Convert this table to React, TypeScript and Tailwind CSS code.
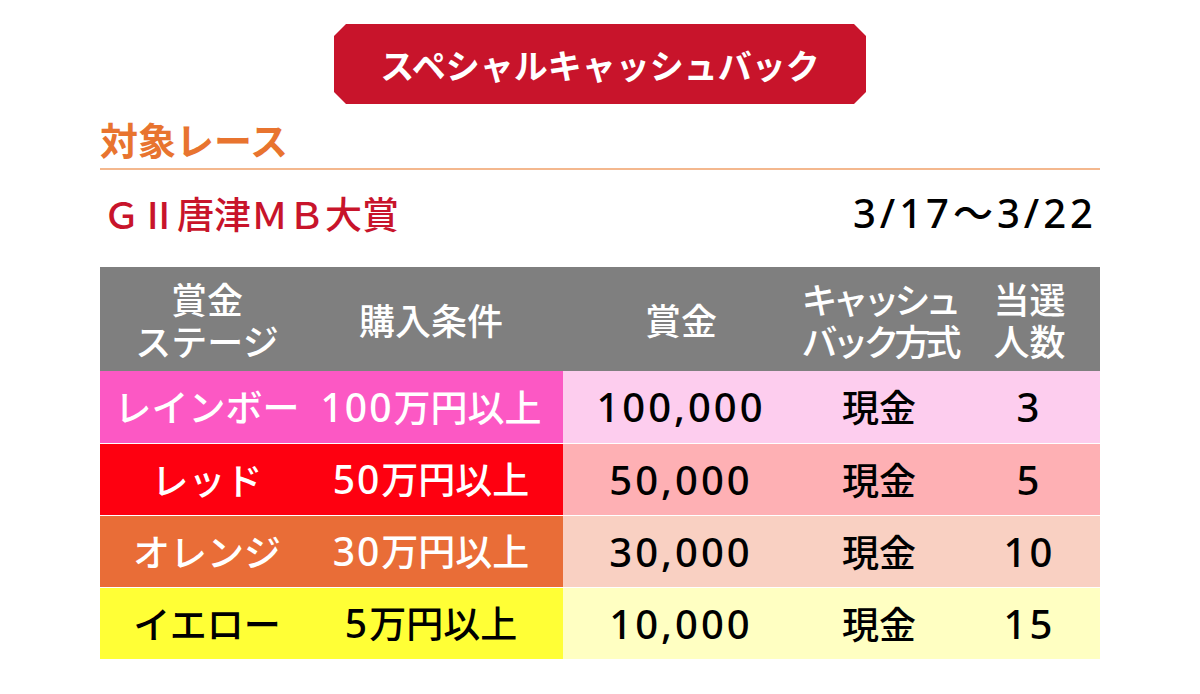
import React from "react";

const rows = [
  { stage: "レインボー", num: "100", prize: "100,000", n: "3", l: "bg-[#fc58c4]", r: "bg-[#fdcdee]", t: "text-white" },
  { stage: "レッド", num: "50", prize: "50,000", n: "5", l: "bg-[#fe0010]", r: "bg-[#feb0b4]", t: "text-white" },
  { stage: "オレンジ", num: "30", prize: "30,000", n: "10", l: "bg-[#e96d37]", r: "bg-[#f9d0c2]", t: "text-white" },
  { stage: "イエロー", num: "5", prize: "10,000", n: "15", l: "bg-[#ffff36]", r: "bg-[#ffffc2]", t: "text-black" },
];

const latin = { fontFamily: '"Noto Sans", "Noto Sans CJK JP", sans-serif' };

export default function App() {
  return (
    <div
      className="w-[1200px] h-[694px] bg-white flex flex-col items-stretch px-[100px]"
      style={{ fontFamily: '"Noto Sans CJK JP", "Noto Sans", sans-serif' }}
    >
      <div className="flex justify-center pt-[24px]">
        <div className="w-[532px] h-[80px] bg-[#c8142b] text-white text-[34px] font-bold flex items-center justify-center [clip-path:polygon(12px_0,calc(100%-12px)_0,100%_12px,100%_calc(100%-12px),calc(100%-12px)_100%,12px_100%,0_calc(100%-12px),0_12px)]">
          スペシャルキャッシュバック
        </div>
      </div>
      <div className="mt-[10px] text-[#e8742f] text-[38px] font-bold leading-[50px]">対象レース</div>
      <div className="mt-[4px] h-[2px] bg-[#f4b88e]" />
      <div className="mt-[18px] flex items-center justify-between leading-[50px]">
        <div className="text-[#c8142b] text-[37px] font-medium pl-[3px]">ＧⅡ唐津ＭＢ大賞</div>
        <div className="text-black text-[40px] font-medium pr-[3px] tracking-[4px]" style={latin}>3/17〜3/22</div>
      </div>
      <div className="mt-[29px] flex flex-col">
        <div className="h-[104px] bg-[#7f7f7f] flex items-center text-white text-[36px] font-medium leading-[42px] text-center">
          <div className="w-[214px]">賞金<br />ステージ</div>
          <div className="w-[249px] pr-[15px]">購入条件</div>
          <div className="w-[236px]">賞金</div>
          <div className="w-[160px] tracking-[-5px] whitespace-nowrap flex flex-col items-center">
            <span>キャッシュ</span>
            <span>バック方式</span>
          </div>
          <div className="flex-1">当選<br />人数</div>
        </div>
        {rows.map((r, i) => (
          <div key={i} className={`h-[72px] flex items-stretch text-[37px] font-medium text-center ${i > 0 ? "border-t border-[#ffffff]/70" : ""}`}>
            <div className={`w-[463px] flex items-center ${r.l} ${r.t}`}>
              <div className="w-[214px]">{r.stage}</div>
              <div className="w-[249px] pr-[15px]">
                <span className="tracking-[2px] text-[39px]" style={latin}>{r.num}</span>万円以上
              </div>
            </div>
            <div className={`flex-1 flex items-center text-black ${r.r}`}>
              <div className="w-[236px] text-[40px] tracking-[3px]" style={latin}>{r.prize}</div>
              <div className="w-[160px]">現金</div>
              <div className="flex-1 text-[40px] tracking-[3px]" style={latin}>{r.n}</div>
            </div>
          </div>
        ))}
      </div>
    </div>
  );
}
